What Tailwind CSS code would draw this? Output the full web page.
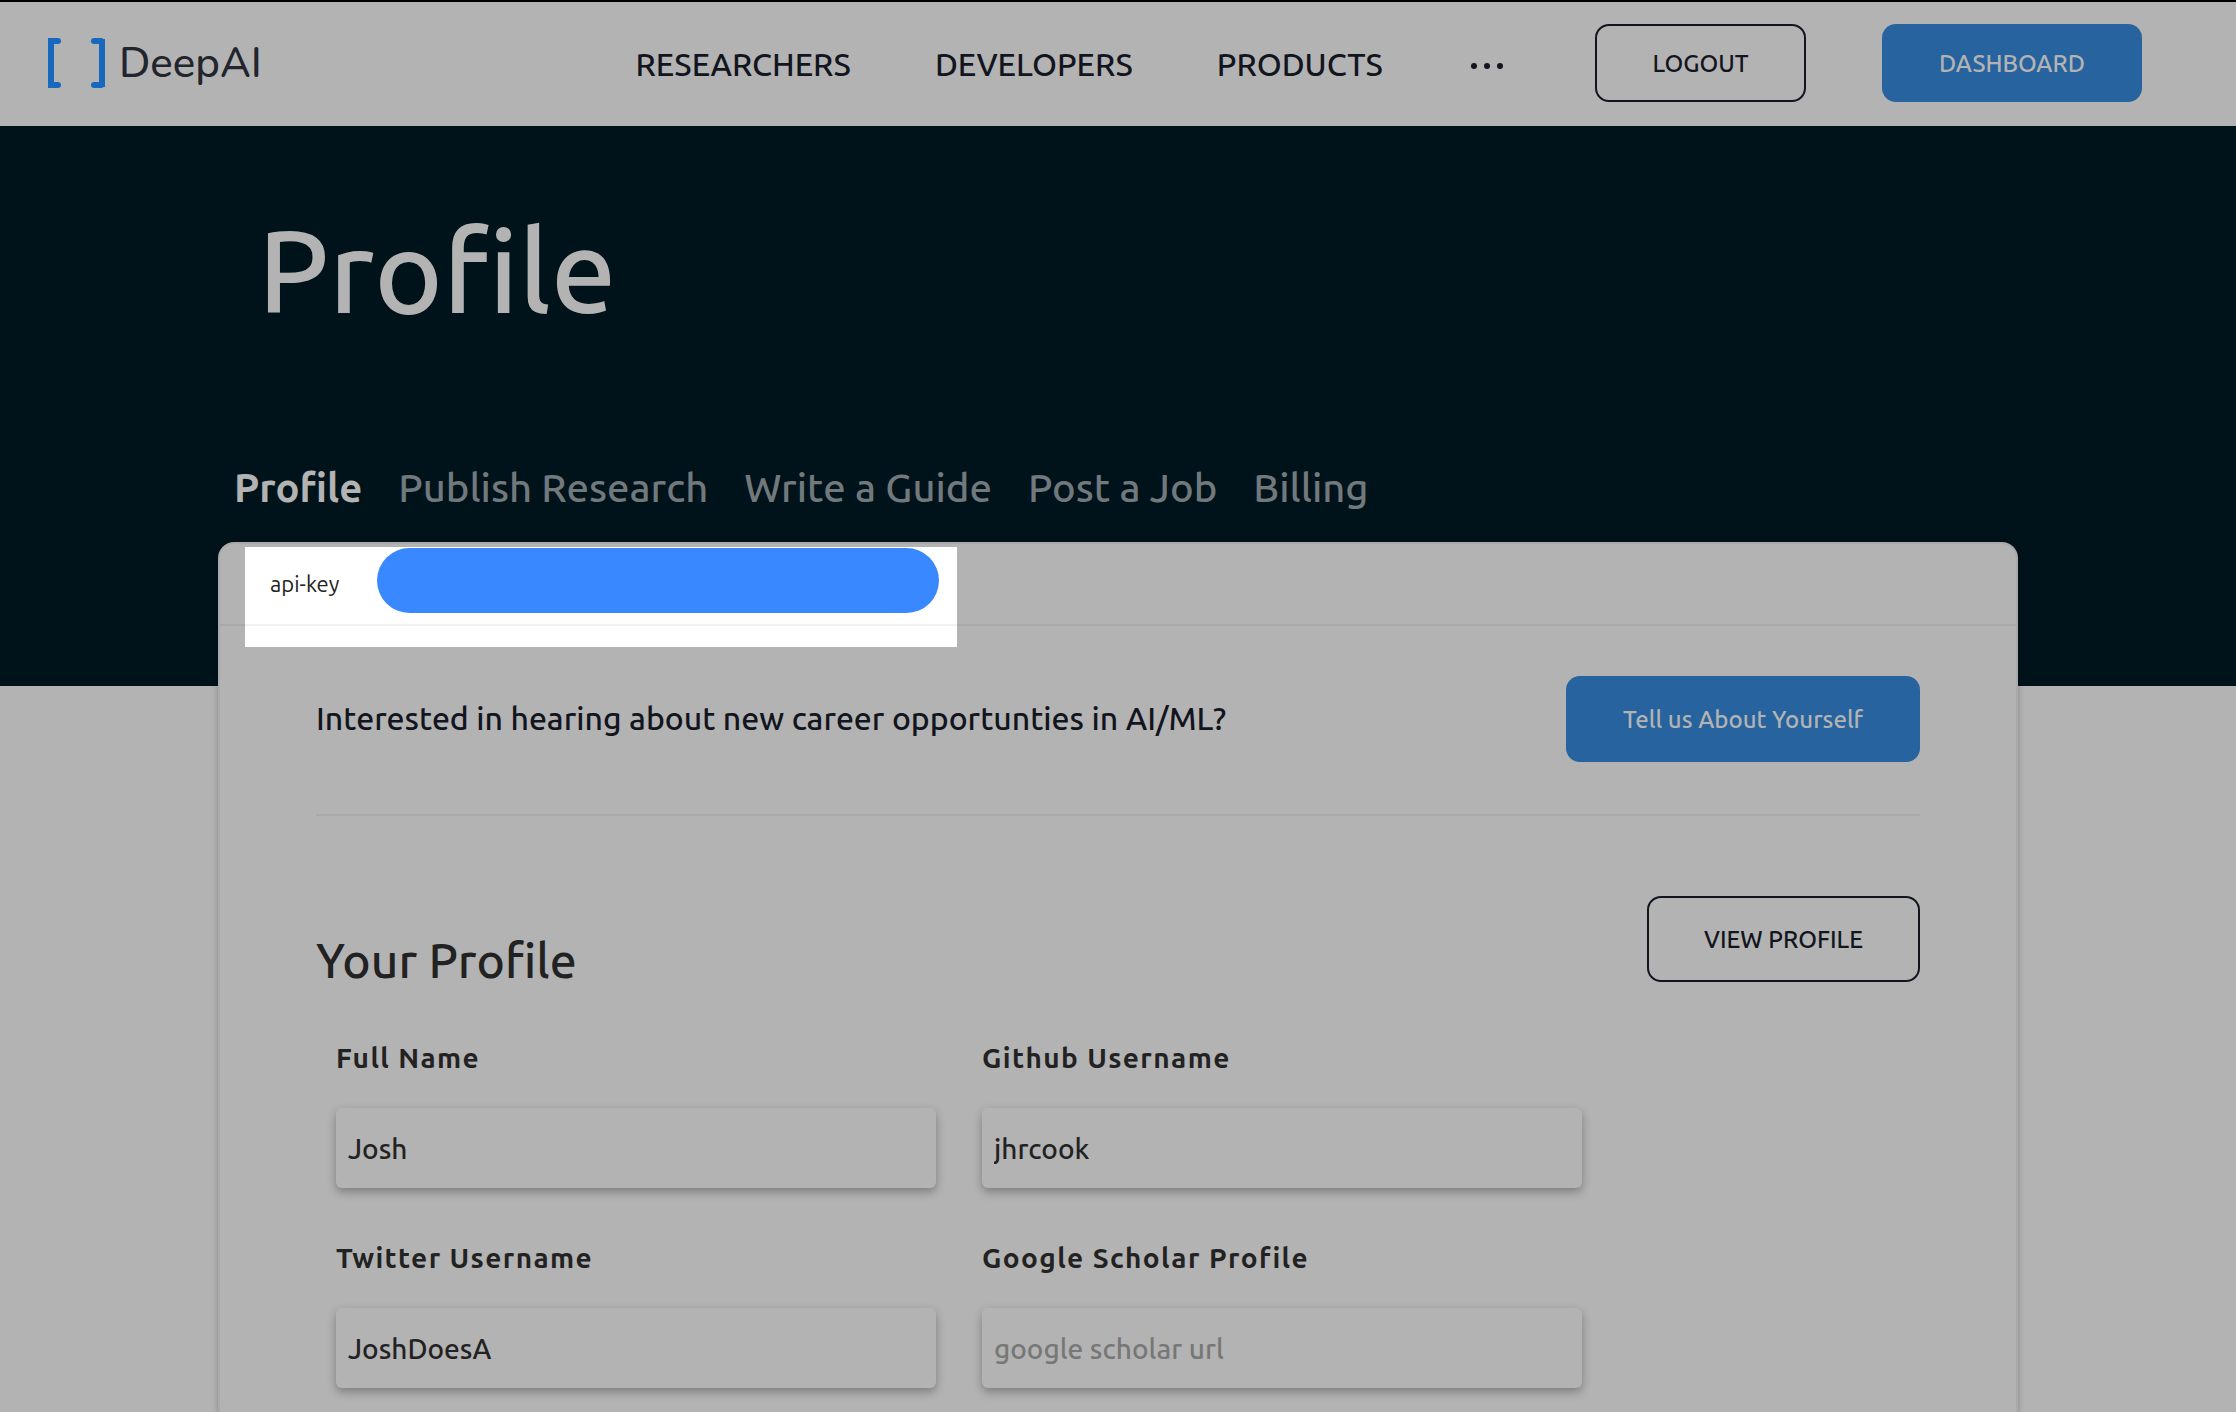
<!DOCTYPE html>
<html lang="en">
<head>
<meta charset="utf-8">
<meta name="viewport" content="width=device-width, initial-scale=1">
<title>DeepAI Profile</title>
<script src="https://cdn.jsdelivr.net/npm/@tailwindcss/browser@4"></script>
</head>
<body class="min-h-screen bg-[#b3b3b3] font-['Ubuntu','Noto_Sans',sans-serif] font-medium text-[#222]">
<header class="flex items-center justify-between border-t-2 border-black bg-[#b3b3b3] pt-[22px] pb-6 pl-12 pr-[94px]">
  <a href="#" class="flex items-center gap-3.5 font-['Nunito','Open_Sans','Noto_Sans',sans-serif] text-[42px] font-medium leading-[50px] text-[#22252e]">
    <svg class="h-[50px] w-[57px]" viewBox="0 0 57 50" fill="none" stroke="#1869bd" stroke-width="6" aria-hidden="true"><path stroke-linecap="round" d="M10 3H4M10 47H4M46 3h7M46 47h7"/><path d="M3 0v50M54 1v48"/></svg>
    <span class="pt-0.5">DeepAI</span>
  </a>
  <div class="flex items-center">
    <nav class="mr-[92px] flex items-center gap-[84px] pt-0.5 text-[32px] leading-10 text-[#12151d]">
      <a href="#">RESEARCHERS</a>
      <a href="#">DEVELOPERS</a>
      <a href="#">PRODUCTS</a>
      <button type="button" aria-label="More" class="ml-1 flex gap-[7px] pt-1"><span class="size-1.5 rounded-full bg-[#12151d]"></span><span class="size-1.5 rounded-full bg-[#12151d]"></span><span class="size-1.5 rounded-full bg-[#12151d]"></span></button>
    </nav>
    <div class="flex gap-[76px] text-2xl">
      <button type="button" class="h-[78px] w-[211px] rounded-[14px] border-2 border-[#12151d] pt-0.5 text-[#12151d]">LOGOUT</button>
      <button type="button" class="h-[78px] w-[260px] rounded-[14px] bg-[#27639e] pt-0.5 text-[#b3b3b3]">DASHBOARD</button>
    </div>
  </div>
</header>
<main>
  <section class="bg-[#00121a] pt-20 pb-[170px]">
    <div class="mx-auto max-w-[1800px]">
      <h1 class="pl-10 text-[116px] leading-[128px] text-[#b3b3b3]">Profile</h1>
      <nav class="mt-[126px] flex gap-9 pl-4 text-[40px] leading-[56px] text-[#71797d]">
        <a href="#" class="font-bold text-[#b3b3b3]">Profile</a>
        <a href="#">Publish Research</a>
        <a href="#">Write a Guide</a>
        <a href="#">Post a Job</a>
        <a href="#">Billing</a>
      </nav>
    </div>
  </section>
  <section class="relative mx-auto -mt-36 max-w-[1800px] rounded-t-2xl border-2 border-b-0 border-[#aaa] bg-[#b3b3b3] pb-6 shadow-[0_2px_6px_rgba(0,0,0,0.25)]">
    <div class="absolute top-[3px] left-[25px] h-[100px] w-[712px] bg-white"></div>
    <div class="relative flex h-[82px] border-b-2 border-black/5 pl-[50px] pt-1">
      <span class="w-[107px] pt-5 text-[22px] leading-8 font-normal text-[#222]">api-key</span>
      <span class="h-[65px] w-[562px] rounded-full bg-[#3a88ff]"></span>
    </div>
    <div class="mx-24">
      <div class="flex items-center justify-between border-b-2 border-black/5 pt-[50px] pb-[52px]">
        <p class="pb-0.5 text-[32px] leading-10 text-[#12151d]">Interested in hearing about new career opportunties in AI/ML?</p>
        <button type="button" class="h-[86px] w-[354px] rounded-[14px] bg-[#27639e] pt-0.5 text-2xl text-[#b3b3b3]">Tell us About Yourself</button>
      </div>
      <div class="flex items-start justify-between pt-20">
        <h2 class="pt-8 text-5xl leading-[64px]">Your Profile</h2>
        <button type="button" class="h-[86px] w-[273px] rounded-[14px] border-2 border-[#12151d] pt-0.5 text-2xl text-[#12151d]">VIEW PROFILE</button>
      </div>
      <form class="mt-[46px] ml-5 grid max-w-[1246px] grid-cols-2 gap-x-[46px] gap-y-[50px] text-[28px]">
        <div class="flex flex-col gap-[30px]"><label for="name" class="font-semibold leading-10 tracking-wider">Full Name</label><input id="name" value="Josh" class="h-20 rounded-md px-3 shadow-[0_4px_10px_rgba(0,0,0,0.3)]"></div>
        <div class="flex flex-col gap-[30px]"><label for="github" class="font-semibold leading-10 tracking-wider">Github Username</label><input id="github" value="jhrcook" class="h-20 rounded-md px-3 shadow-[0_4px_10px_rgba(0,0,0,0.3)]"></div>
        <div class="flex flex-col gap-[30px]"><label for="twitter" class="font-semibold leading-10 tracking-wider">Twitter Username</label><input id="twitter" value="JoshDoesA" class="h-20 rounded-md px-3 shadow-[0_4px_10px_rgba(0,0,0,0.3)]"></div>
        <div class="flex flex-col gap-[30px]"><label for="scholar" class="font-semibold leading-10 tracking-wider">Google Scholar Profile</label><input id="scholar" placeholder="google scholar url" class="h-20 rounded-md px-3 shadow-[0_4px_10px_rgba(0,0,0,0.3)] placeholder:text-[#777]"></div>
      </form>
    </div>
  </section>
</main>
</body>
</html>
